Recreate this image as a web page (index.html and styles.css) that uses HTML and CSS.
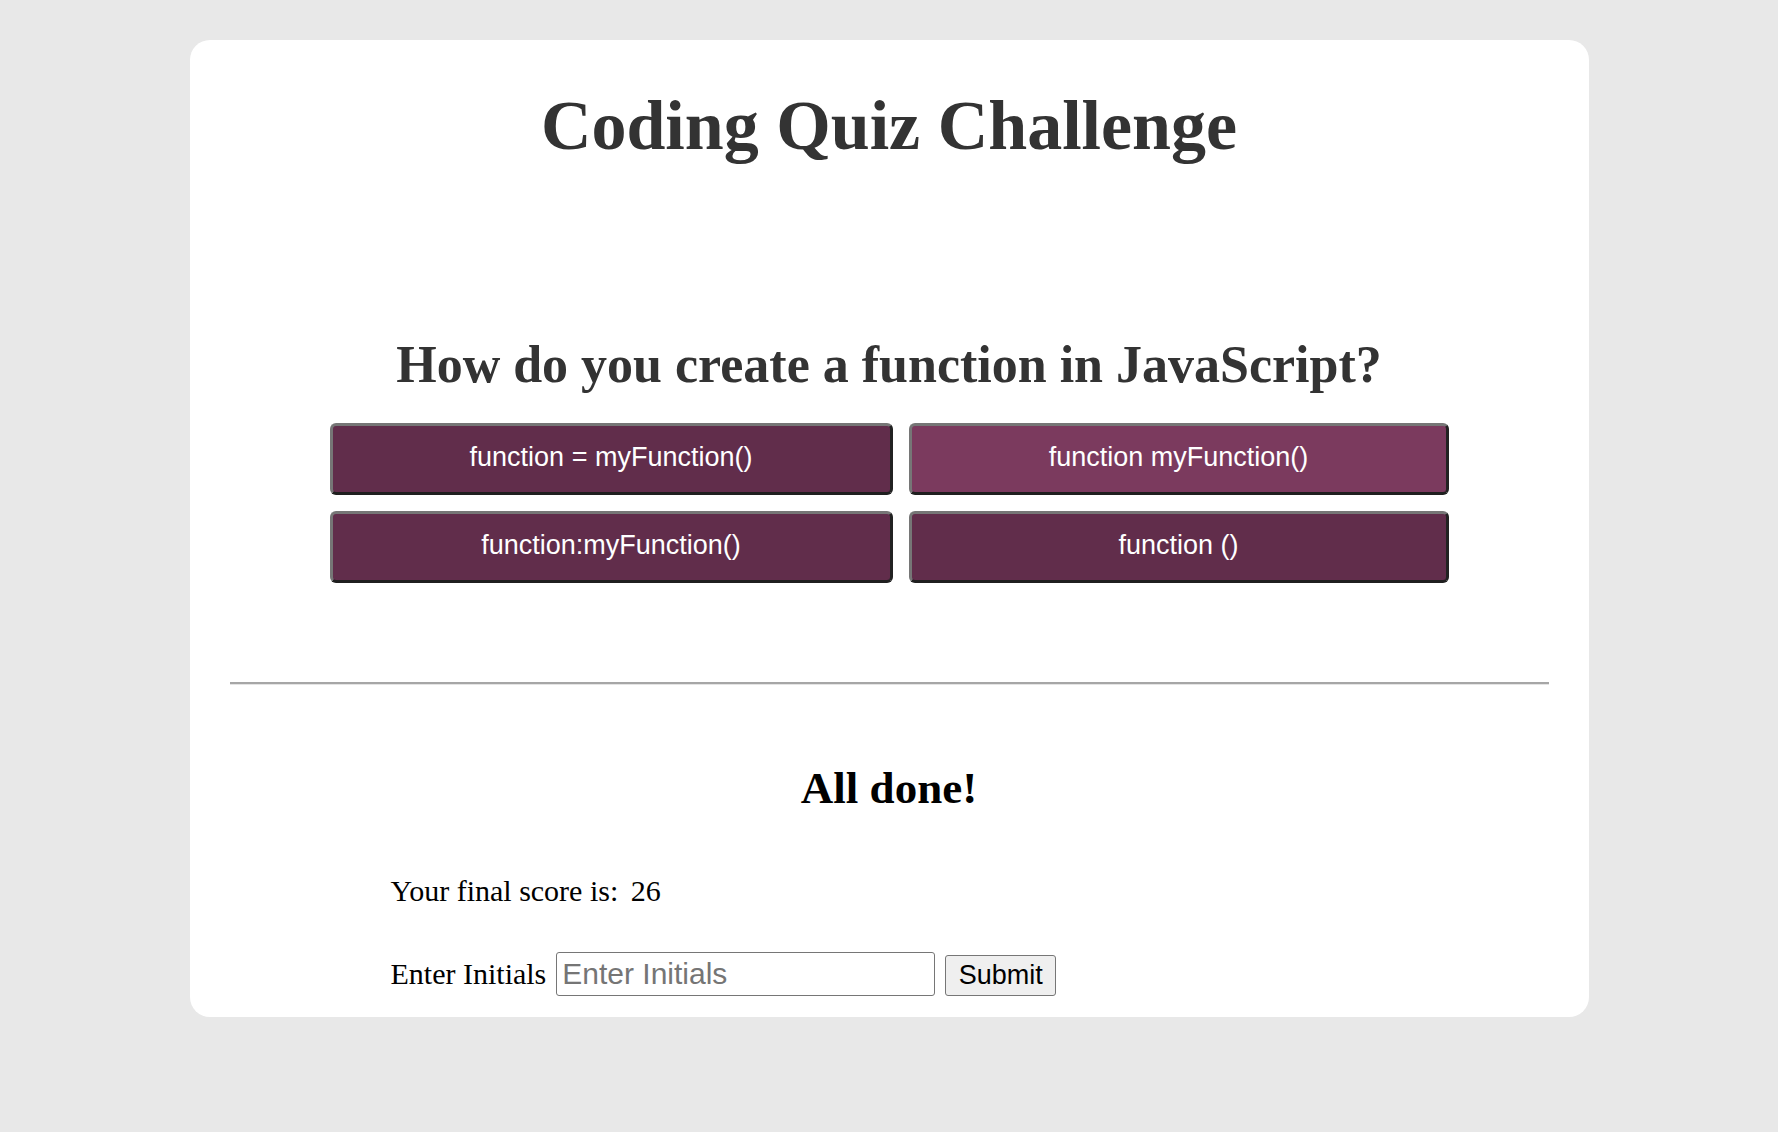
FILE: index.html
```html
<!DOCTYPE html>
<html lang="en">
<head>
<meta charset="utf-8">
<title>Coding Quiz Challenge</title>
<link rel="stylesheet" href="styles.css">
</head>
<body>
  <main class="card">
    <h1 class="title">Coding Quiz Challenge</h1>
    <section class="question">
      <h2 class="question-text">How do you create a function in JavaScript?</h2>
      <div class="choices">
        <button class="choice">function = myFunction()</button>
        <button class="choice choice-active">function myFunction()</button>
        <button class="choice">function:myFunction()</button>
        <button class="choice">function ()</button>
      </div>
    </section>
    <hr class="divider">
    <section class="done">
      <h2 class="done-title">All done!</h2>
      <p class="score">Your final score is: <span class="score-value">26</span></p>
      <form class="initials-form">
        <label class="initials-label" for="initials">Enter Initials</label>
        <input class="initials-input" id="initials" type="text" placeholder="Enter Initials">
        <button class="submit" type="button">Submit</button>
      </form>
    </section>
  </main>
</body>
</html>
```

FILE: styles.css
```css
html, body {
  margin: 0;
  padding: 0;
}

body {
  background: #e8e8e8;
  font-family: "Liberation Serif", "Times New Roman", serif;
  padding-top: 40px;
  min-height: 1132px;
  box-sizing: border-box;
}

.card {
  width: 1399px;
  margin: 0 auto;
  background: #ffffff;
  border-radius: 20px;
  padding: 46px 40px 21px;
  box-sizing: border-box;
}

.title {
  margin: 0;
  text-align: center;
  font-size: 70px;
  font-weight: bold;
  line-height: normal;
  color: #333333;
}

.question {
  margin-top: 169px;
}

.question-text {
  margin: 0;
  text-align: center;
  font-size: 52px;
  font-weight: bold;
  line-height: normal;
  color: #333333;
}

.choices {
  display: grid;
  grid-template-columns: 563px 540px;
  gap: 16px;
  justify-content: center;
  margin-top: 29px;
}

.choice {
  height: 72px;
  background: #612d4b;
  color: #ffffff;
  font-family: "Liberation Sans", Arial, sans-serif;
  font-size: 27px;
  border-style: solid;
  border-width: 3px;
  border-color: #767676 #222222 #1f1f1f #767676;
  border-radius: 6px;
  padding: 0 0 3px;
  cursor: pointer;
}

.choice-active {
  background: #7b3a5e;
}

.divider {
  margin: 99px 0 0;
  height: 0;
  border: 0;
  border-top: 2px solid #a6a6a6;
  border-bottom: 1px solid #e4e4e4;
}

.done {
  padding-top: 77px;
}

.done-title {
  margin: 0;
  text-align: center;
  font-size: 45px;
  font-weight: bold;
  line-height: normal;
  color: #000000;
}

.score {
  margin: 60px 0 0 161px;
  font-size: 30px;
  line-height: normal;
  color: #000000;
}

.score-value {
  margin-left: 5px;
}

.initials-form {
  display: flex;
  align-items: baseline;
  margin: 44px 0 0 161px;
}

.initials-label {
  font-size: 30px;
  color: #000000;
  margin-right: 10px;
}

.initials-input {
  width: 379px;
  height: 44px;
  box-sizing: border-box;
  border: 1px solid #767676;
  border-radius: 3px;
  padding: 0 5px;
  font-family: "Liberation Sans", Arial, sans-serif;
  font-size: 30px;
  color: #000000;
}

.initials-input::placeholder {
  color: #757575;
}

.submit {
  margin-left: 10px;
  width: 111px;
  height: 41px;
  box-sizing: border-box;
  background: #efefef;
  border: 1px solid #767676;
  border-radius: 3px;
  font-family: "Liberation Sans", Arial, sans-serif;
  font-size: 27px;
  color: #000000;
  padding: 0;
}
```
